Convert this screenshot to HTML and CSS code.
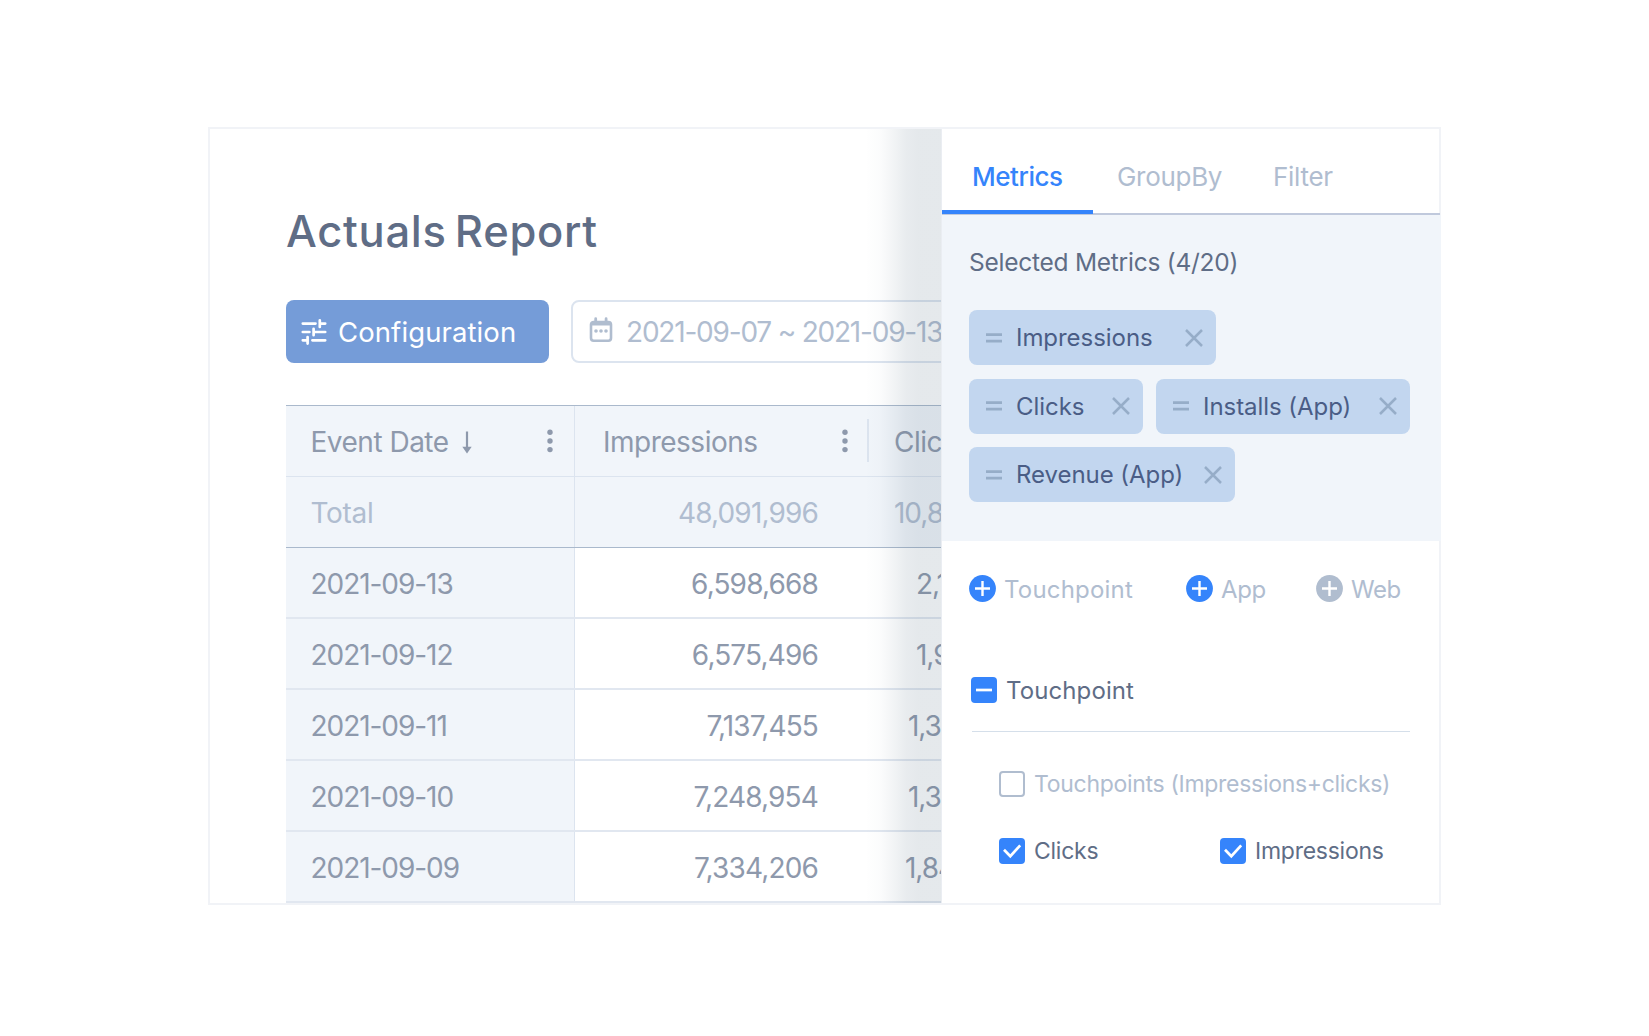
FILE: index.html
```html
<!DOCTYPE html>
<html lang="en">
<head>
    <meta charset="UTF-8">
    <meta name="viewport" content="width=device-width, initial-scale=1.0">
    <title>Actuals Report</title>
    <link rel="stylesheet" href="styles.css">
</head>
<body>
    <svg width="0" height="0" class="symbols">
        <symbol id="icon-close" viewBox="0 0 18 18">
            <path d="M1 1L17 17M17 1L1 17" fill="none" stroke="currentColor" stroke-width="2.5"/>
        </symbol>
        <symbol id="icon-drag" viewBox="0 0 16 10">
            <path d="M0 1.7H16M0 8.1H16" fill="none" stroke="currentColor" stroke-width="2.7"/>
        </symbol>
        <symbol id="icon-plus" viewBox="0 0 27 27">
            <circle cx="13.5" cy="13.5" r="13.4" fill="currentColor"/>
            <path d="M6 13.5H21M13.5 6V21" fill="none" stroke="#fff" stroke-width="2.4"/>
        </symbol>
        <symbol id="icon-check" viewBox="0 0 26 26">
            <path d="M5 11.8L11.3 18.2L21.2 7.4" fill="none" stroke="#fff" stroke-width="2.7"/>
        </symbol>
        <symbol id="icon-dots" viewBox="0 0 6 24">
            <circle cx="3" cy="3.2" r="2.7" fill="currentColor"/>
            <circle cx="3" cy="12" r="2.7" fill="currentColor"/>
            <circle cx="3" cy="20.6" r="2.7" fill="currentColor"/>
        </symbol>
    </svg>

    <div class="frame">
        <div class="report">
            <h1 class="title">Actuals Report</h1>
            <div class="toolbar">
                <button class="config-button">
                    <svg width="26" height="26" viewBox="0 0 26 26" fill="none" stroke="#fff" stroke-width="2.7" stroke-linecap="round">
                        <path d="M1.8 4.6H14.5M18.8 4.6H24.2M18.8 1.4V7.9M1.8 13H8.4M12.6 13H24.2M12.6 9.8V16.2M1.8 21.3H6.6M6.6 18V24.6M11.4 21.3H24.2"/>
                    </svg>
                    <span>Configuration</span>
                </button>
                <div class="date-input">
                    <svg width="24" height="26" viewBox="0 0 24 26">
                        <path d="M6.7 1.7V6M17.1 1.7V6" stroke="#b0bdcf" stroke-width="2.8" stroke-linecap="round"/>
                        <rect x="2" y="5" width="20" height="18.7" rx="2.6" fill="none" stroke="#b0bdcf" stroke-width="2.6"/>
                        <path d="M2 5H22V8.5H2Z" fill="#b0bdcf"/>
                        <circle cx="7" cy="14" r="1.8" fill="#b0bdcf"/>
                        <circle cx="12" cy="14" r="1.8" fill="#b0bdcf"/>
                        <circle cx="17" cy="14" r="1.8" fill="#b0bdcf"/>
                    </svg>
                    <span>2021-09-07 ~ 2021-09-13</span>
                </div>
            </div>

            <div class="table">
                <div class="row row-head">
                    <div class="cell cell-date">
                        <span>Event Date</span>
                        <svg class="sort" width="10" height="23" viewBox="0 0 10 23">
                            <path d="M5 0.5V18" stroke="currentColor" stroke-width="2.2"/>
                            <path d="M0.3 15.8H9.7L5 22.4Z" fill="currentColor"/>
                        </svg>
                        <svg class="dots" width="6" height="24"><use href="#icon-dots"/></svg>
                    </div>
                    <div class="cell cell-impressions">
                        <span>Impressions</span>
                        <svg class="dots" width="6" height="24"><use href="#icon-dots"/></svg>
                        <i class="separator"></i>
                    </div>
                    <div class="cell cell-clicks">Clic</div>
                </div>
                <div class="row row-total">
                    <div class="cell cell-date">Total</div>
                    <div class="cell cell-impressions">48,091,996</div>
                    <div class="cell cell-clicks">10,8</div>
                </div>
                <div class="row">
                    <div class="cell cell-date">2021-09-13</div>
                    <div class="cell cell-impressions">6,598,668</div>
                    <div class="cell cell-clicks indent-lg">2,1</div>
                </div>
                <div class="row">
                    <div class="cell cell-date">2021-09-12</div>
                    <div class="cell cell-impressions">6,575,496</div>
                    <div class="cell cell-clicks indent-lg">1,9</div>
                </div>
                <div class="row">
                    <div class="cell cell-date">2021-09-11</div>
                    <div class="cell cell-impressions">7,137,455</div>
                    <div class="cell cell-clicks indent-md">1,3</div>
                </div>
                <div class="row">
                    <div class="cell cell-date">2021-09-10</div>
                    <div class="cell cell-impressions">7,248,954</div>
                    <div class="cell cell-clicks indent-md">1,3</div>
                </div>
                <div class="row">
                    <div class="cell cell-date">2021-09-09</div>
                    <div class="cell cell-impressions">7,334,206</div>
                    <div class="cell cell-clicks indent-sm">1,84</div>
                </div>
            </div>
        </div>

        <div class="panel">
            <div class="tabs">
                <div class="tab tab-active">Metrics</div>
                <div class="tab">GroupBy</div>
                <div class="tab">Filter</div>
            </div>

            <div class="selected">
                <div class="selected-title">Selected Metrics (4/20)</div>
                <div class="chips">
                    <div class="chip-row">
                        <div class="chip chip-impressions">
                            <svg class="drag" width="16" height="10"><use href="#icon-drag"/></svg>
                            <span>Impressions</span>
                            <svg class="close" width="18" height="18"><use href="#icon-close"/></svg>
                        </div>
                    </div>
                    <div class="chip-row">
                        <div class="chip chip-clicks">
                            <svg class="drag" width="16" height="10"><use href="#icon-drag"/></svg>
                            <span>Clicks</span>
                            <svg class="close" width="18" height="18"><use href="#icon-close"/></svg>
                        </div>
                        <div class="chip chip-installs">
                            <svg class="drag" width="16" height="10"><use href="#icon-drag"/></svg>
                            <span>Installs (App)</span>
                            <svg class="close" width="18" height="18"><use href="#icon-close"/></svg>
                        </div>
                    </div>
                    <div class="chip-row">
                        <div class="chip chip-revenue">
                            <svg class="drag" width="16" height="10"><use href="#icon-drag"/></svg>
                            <span>Revenue (App)</span>
                            <svg class="close" width="18" height="18"><use href="#icon-close"/></svg>
                        </div>
                    </div>
                </div>
            </div>

            <div class="adders">
                <div class="adder adder-touchpoint">
                    <svg width="27" height="27"><use href="#icon-plus"/></svg>
                    <span>Touchpoint</span>
                </div>
                <div class="adder">
                    <svg width="27" height="27"><use href="#icon-plus"/></svg>
                    <span>App</span>
                </div>
                <div class="adder adder-off">
                    <svg width="27" height="27"><use href="#icon-plus"/></svg>
                    <span>Web</span>
                </div>
            </div>

            <div class="group">
                <div class="option option-group">
                    <span class="checkbox checked">
                        <svg width="26" height="26"><path d="M5 13H21" stroke="#fff" stroke-width="2.7"/></svg>
                    </span>
                    <span>Touchpoint</span>
                </div>
                <div class="options">
                    <div class="option option-wide option-off">
                        <span class="checkbox"></span>
                        <span>Touchpoints (Impressions+clicks)</span>
                    </div>
                    <div class="option">
                        <span class="checkbox checked"><svg width="26" height="26"><use href="#icon-check"/></svg></span>
                        <span>Clicks</span>
                    </div>
                    <div class="option">
                        <span class="checkbox checked"><svg width="26" height="26"><use href="#icon-check"/></svg></span>
                        <span>Impressions</span>
                    </div>
                </div>
            </div>
        </div>
    </div>
</body>
</html>
```
FILE: styles.css
```css
* {
    box-sizing: border-box;
}
body {
    margin: 0;
    padding: 127px 208px 0;
    background-color: #fff;
    font-family: Inter, "Liberation Sans", sans-serif;
    color: #5f6d86;
}
svg {
    display: block;
    flex-shrink: 0;
}
.symbols {
    position: absolute;
}
.frame {
    width: 1233px;
    height: 778px;
    border: 2px solid #f1f3f7;
    display: flex;
}

/* report */
.report {
    position: relative;
    width: 732px;
    padding: 76px 0 0 76px;
    border-right: 1px solid #eaedf2;
    overflow: hidden;
}
/* shadow cast by the side panel */
.report::after {
    content: "";
    position: absolute;
    top: 0;
    right: 0;
    bottom: 0;
    width: 76px;
    background: linear-gradient(to right, rgba(70, 98, 119, 0), rgba(70, 98, 119, 0.02) 20%, rgba(70, 98, 119, 0.075) 39%, rgba(70, 98, 119, 0.12) 54%, rgba(70, 98, 119, 0.14) 70%);
}
.title {
    margin: 0 0 43px;
    font-size: 43.5px;
    line-height: 52px;
    font-weight: 500;
    letter-spacing: 0.7px;
    word-spacing: -4px;
}
.toolbar {
    display: flex;
    gap: 22px;
    height: 63px;
    margin-bottom: 42px;
}
.config-button {
    display: flex;
    align-items: center;
    flex-shrink: 0;
    gap: 11px;
    width: 263px;
    padding: 0 0 0 15px;
    border: 0;
    border-radius: 8px;
    background-color: #759cd8;
    color: #fff;
    font: inherit;
    font-size: 27.5px;
    letter-spacing: 0.1px;
}
.date-input {
    display: flex;
    align-items: center;
    flex-shrink: 0;
    gap: 13px;
    width: 420px;
    padding-left: 16px;
    border: 2px solid #dce4ef;
    border-radius: 8px;
    color: #b0bdd0;
    font-size: 28px;
    letter-spacing: -1.2px;
    white-space: nowrap;
}
.date-input svg {
    margin-top: -3px;
}

/* table */
.table {
    width: 760px;
    border-top: 1px solid #aab9cc;
    font-size: 28px;
    letter-spacing: -1.05px;
    color: #8e99ac;
}
.row {
    display: flex;
    height: 71px;
    border-bottom: 2px solid #e1e7f0;
}
.row-head,
.row-total {
    border-bottom: 1px solid #dce4ef;
    background-color: #f1f5fa;
}
.row-total {
    height: 71.4px;
    border-bottom-color: #aab9cc;
    color: #b0bdd0;
}
.cell {
    display: flex;
    align-items: center;
    padding-top: 3px;
}
.row-head .cell,
.row-total .cell {
    padding-top: 2px;
}
.cell-date {
    width: 289px;
    padding-left: 24.5px;
    border-right: 1px solid #dce4ef;
    background-color: #f1f5fa;
}
.cell-impressions {
    width: 294px;
    padding-right: 51px;
    justify-content: flex-end;
    letter-spacing: -0.85px;
}
.cell-clicks {
    padding-left: 25px;
}
.row-head .cell {
    letter-spacing: -0.5px;
}
.row-head .cell-impressions {
    padding-left: 28px;
    padding-right: 0;
    justify-content: flex-start;
}
.row .indent-sm {
    padding-left: 36px;
}
.row .indent-md {
    padding-left: 39px;
}
.row .indent-lg {
    padding-left: 47px;
}
.row-total .cell-date {
    letter-spacing: -0.3px;
}
.sort {
    margin-left: 13px;
}
.dots {
    margin: -3px 21px 0 auto;
}
.separator {
    width: 2px;
    height: 43px;
    margin-top: -3px;
    background-color: #dce4ef;
}
.cell-impressions .dots {
    margin-right: 19.5px;
}

/* side panel */
.panel {
    width: 497px;
    flex-shrink: 0;
}
.tabs {
    display: flex;
    width: 498px;
    height: 86px;
    border-bottom: 2px solid #c0c9dc;
    font-size: 26px;
    line-height: 32px;
    letter-spacing: -0.3px;
    color: #b0bdd0;
}
.tab {
    padding: 32px 0 0 24px;
    width: 156px;
}
.tab-active {
    width: 151px;
    height: 85px;
    padding-left: 30px;
    border-bottom: 4px solid #3584fb;
    color: #3584fb;
    font-weight: 500;
    letter-spacing: -0.45px;
}
.selected {
    width: 499px;
    height: 326px;
    padding: 32px 27px 0;
    background-color: #f1f5fa;
}
.selected-title {
    margin-bottom: 33px;
    font-size: 24.5px;
    line-height: 30px;
    letter-spacing: -0.25px;
}
.chips {
    display: flex;
    flex-direction: column;
    gap: 13.5px;
}
.chip-row {
    display: flex;
    gap: 13px;
}
.chip {
    display: flex;
    align-items: center;
    height: 55px;
    padding: 0 13.5px 0 16.5px;
    border-radius: 8px;
    background-color: #c2d6ef;
    font-size: 24px;
    letter-spacing: -0.05px;
    color: #4a5d86;
    white-space: nowrap;
}
.chip-impressions {
    width: 247px;
}
.chip-clicks {
    width: 174px;
}
.chip-installs {
    width: 254px;
}
.chip-revenue {
    width: 266px;
}
.drag {
    margin-right: 14.5px;
    color: #96adc8;
}
.close {
    margin-left: auto;
    color: #96adc8;
}
.adders {
    display: grid;
    grid-template-columns: 217px 130px 1fr;
    padding: 32px 0 0 27px;
    font-size: 24px;
    line-height: 30px;
    letter-spacing: -0.4px;
    color: #b0bdd0;
}
.adder {
    display: flex;
    align-items: center;
    gap: 8px;
    height: 31px;
}
.adder span {
    padding-top: 2px;
}
.adder svg {
    color: #3584fb;
}
.adder-touchpoint {
    letter-spacing: 0.2px;
}
.adder-off svg {
    color: #b0bdcf;
}
.group {
    padding: 73px 29px 0 30px;
}
.option {
    display: flex;
    align-items: center;
    gap: 9px;
    height: 26px;
    font-size: 23px;
    letter-spacing: -0.25px;
    white-space: nowrap;
}
.option-group {
    margin-left: -1px;
    font-size: 24px;
    letter-spacing: 0.1px;
}
.option-off {
    letter-spacing: -0.3px;
    color: #b0bdd0;
}
.option-wide {
    grid-column: span 2;
}
.options {
    display: grid;
    grid-template-columns: 221px 1fr;
    row-gap: 41px;
    margin-top: 28px;
    padding: 39px 0 0 27px;
    border-top: 1px solid #d5dfea;
}
.checkbox {
    flex-shrink: 0;
    width: 26px;
    height: 26px;
    border: 2.5px solid #b0bdcf;
    border-radius: 4px;
}
.checked {
    border: 0;
    background-color: #3584fb;
}
```
